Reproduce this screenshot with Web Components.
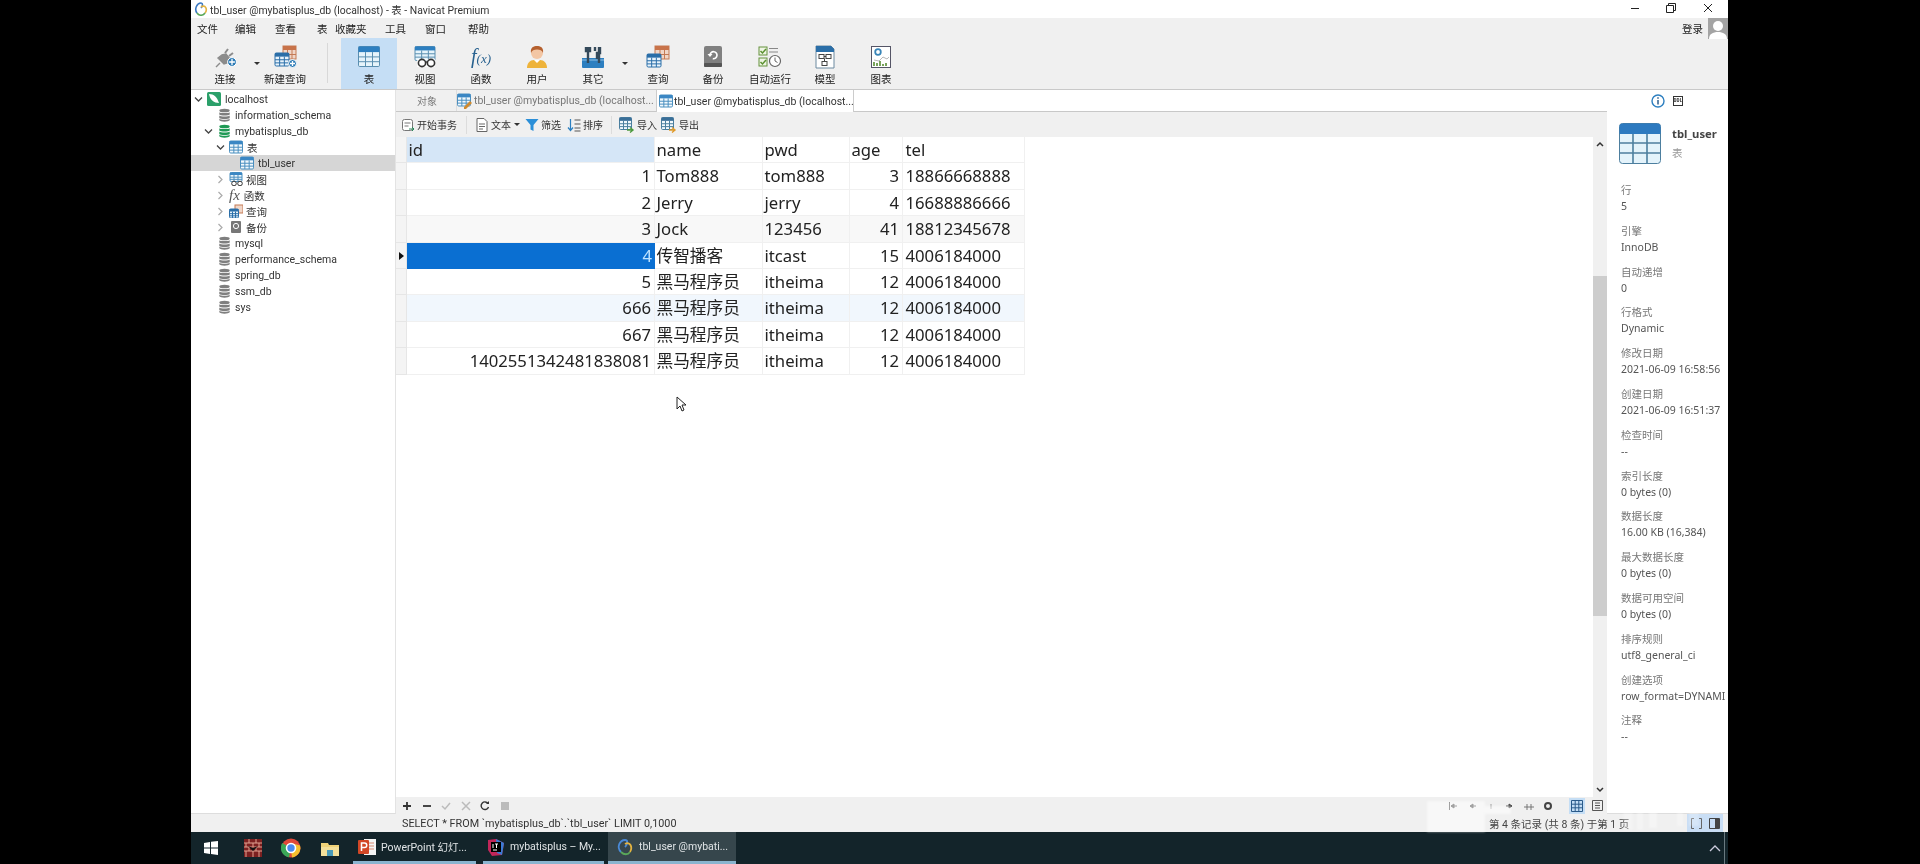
<!DOCTYPE html>
<html lang="zh">
<head>
<meta charset="utf-8">
<title>tbl_user - Navicat Premium</title>
<style>
html,body{margin:0;height:100%;background:#000;overflow:hidden;}
body{font-family:"Noto Sans","Noto Sans CJK SC",sans-serif;}
</style>
</head>
<body>
<app-window>
  <title-bar>tbl_user @mybatisplus_db (localhost) - 表 - Navicat Premium</title-bar>
  <menu-bar>
    <span style="width:38px">文件</span><span style="width:40px">编辑</span><span style="width:42px">查看</span><span style="width:18px">表</span><span style="width:50px">收藏夹</span><span style="width:40px">工具</span><span style="width:43px">窗口</span><span style="width:40px">帮助</span>
  </menu-bar>
  <tool-bar>
    <tool-button icon="plug" w="56">连接</tool-button><drop-arrow></drop-arrow>
    <tool-button icon="newquery" w="48">新建查询</tool-button>
    <tool-sep></tool-sep>
    <tool-button icon="table" w="56" active>表</tool-button>
    <tool-button icon="view" w="56">视图</tool-button>
    <tool-button icon="func" w="56">函数</tool-button>
    <tool-button icon="user" w="56">用户</tool-button>
    <tool-button icon="tools" w="56">其它</tool-button><drop-arrow></drop-arrow>
    <tool-button icon="query" w="58">查询</tool-button>
    <tool-button icon="backup" w="52">备份</tool-button>
    <tool-button icon="auto" w="62">自动运行</tool-button>
    <tool-button icon="model" w="48">模型</tool-button>
    <tool-button icon="chart" w="64">图表</tool-button>
  </tool-bar>
  <work-space>
    <tree-panel>
      <tree-row pad="2" chev="open" chm="3" icon="host" gap="3">localhost</tree-row>
      <tree-row pad="27" icon="db">information_schema</tree-row>
      <tree-row pad="12" chev="open" icon="dbon">mybatisplus_db</tree-row>
      <tree-row pad="24" chev="open" chm="4" icon="tbl">表</tree-row>
      <tree-row pad="49" icon="tbl" sel>tbl_user</tree-row>
      <tree-row pad="24" chev="shut" chm="4" icon="view2" gap="3">视图</tree-row>
      <tree-row pad="24" chev="shut" chm="4" icon="fx" gap="4">函数</tree-row>
      <tree-row pad="24" chev="shut" chm="4" icon="query2" gap="3">查询</tree-row>
      <tree-row pad="24" chev="shut" chm="4" icon="bak2" gap="3">备份</tree-row>
      <tree-row pad="27" icon="db">mysql</tree-row>
      <tree-row pad="27" icon="db">performance_schema</tree-row>
      <tree-row pad="27" icon="db">spring_db</tree-row>
      <tree-row pad="27" icon="db">ssm_db</tree-row>
      <tree-row pad="27" icon="db">sys</tree-row>
    </tree-panel>
    <center-pane>
      <tab-strip>
        <tab-item w="60" kind="plain">对象</tab-item>
        <tab-item w="200" kind="back" icon="tbledit">tbl_user @mybatisplus_db (localhost...</tab-item>
        <tab-item w="198" kind="front" icon="tbl">tbl_user @mybatisplus_db (localhost...</tab-item>
      </tab-strip>
      <sub-toolbar>
        <sub-tool icon="begin" style="margin-left:5px">开始事务</sub-tool>
        <bar-sep style="margin:0 8px 0 9px"></bar-sep>
        <sub-tool icon="text">文本</sub-tool><drop-arrow style="margin:0 4px 0 2px"></drop-arrow>
        <sub-tool icon="filter">筛选</sub-tool>
        <sub-tool icon="sort" style="margin-left:6px">排序</sub-tool>
        <bar-sep style="margin:0 7px 0 8px"></bar-sep>
        <sub-tool icon="imp">导入</sub-tool>
        <sub-tool icon="exp" style="margin-left:4px">导出</sub-tool>
      </sub-toolbar>
      <grid-area>
        <data-grid></data-grid>
        <v-scroll slot="bar"></v-scroll>
      </grid-area>
      <grid-footer></grid-footer>
    </center-pane>
    <info-panel>
      <info-item label="行">5</info-item>
      <info-item label="引擎">InnoDB</info-item>
      <info-item label="自动递增">0</info-item>
      <info-item label="行格式">Dynamic</info-item>
      <info-item label="修改日期">2021-06-09 16:58:56</info-item>
      <info-item label="创建日期">2021-06-09 16:51:37</info-item>
      <info-item label="检查时间">--</info-item>
      <info-item label="索引长度">0 bytes (0)</info-item>
      <info-item label="数据长度">16.00 KB (16,384)</info-item>
      <info-item label="最大数据长度">0 bytes (0)</info-item>
      <info-item label="数据可用空间">0 bytes (0)</info-item>
      <info-item label="排序规则">utf8_general_ci</info-item>
      <info-item label="创建选项">row_format=DYNAMI</info-item>
      <info-item label="注释">--</info-item>
    </info-panel>
  </work-space>
  <status-bar>SELECT * FROM `mybatisplus_db`.`tbl_user` LIMIT 0,1000</status-bar>
  <task-bar></task-bar>
  <water-mark></water-mark>
  <mouse-cursor></mouse-cursor>
</app-window>

<script>
// icons, all drawn by hand in a 24 box unless the viewBox says other
const tblGrid = (x,y,w,h,head,line,fill) => {
  let cw=w/3, ch=(h-h*0.28)/3, hh=h*0.28, s=`<rect x="${x}" y="${y}" width="${w}" height="${h}" rx="1.2" fill="${fill}" stroke="${line}" stroke-width="1"/><rect x="${x}" y="${y}" width="${w}" height="${hh}" fill="${head}"/>`;
  for(let i=1;i<3;i++){ s+=`<path d="M${x+cw*i} ${y+hh}V${y+h}M${x} ${y+hh+ch*i}H${x+w}" stroke="${line}" stroke-width="1" fill="none"/>`; }
  return s;
};
const svg = (inner,w=24,h=24,vb='0 0 24 24') => `<svg xmlns="http://www.w3.org/2000/svg" width="${w}" height="${h}" viewBox="${vb}">${inner}</svg>`;
const plus = (cx,cy,r) => `<circle cx="${cx}" cy="${cy}" r="${r}" fill="#2c7bb6" stroke="#fff"/><path d="M${cx-r+1.5} ${cy}H${cx+r-1.5}M${cx} ${cy-r+1.5}V${cy+r-1.5}" stroke="#fff" stroke-width="1.3"/>`;
const dbShape = (c) => `<g fill="${c}"><ellipse cx="7" cy="2.6" rx="5.6" ry="2"/><path d="M1.4 4.4c1 1.3 10.2 1.3 11.2 0V7c-1 1.5-10.2 1.5-11.2 0z"/><path d="M1.4 8c1 1.4 10.2 1.4 11.2 0v2.6c-1 1.5-10.2 1.5-11.2 0z"/><path d="M1.4 11.6c1 1.4 10.2 1.4 11.2 0v1.6c-1 1.9-10.2 1.9-11.2 0z"/></g>`;
const ICON = {
  plug: svg(`<path d="M3 22l4-4M5 13l6 6 3-1 3-4-4-5-4 1z" fill="#8c8c8c" stroke="#8c8c8c" stroke-width="1.4"/><path d="M12 8l3-4M16 11l4-3" stroke="#8c8c8c" stroke-width="2"/>${plus(19,17,4.4)}`),
  newquery: svg(`<rect x="10" y="1" width="13" height="13" fill="#f0d6c8" stroke="#c47a55"/><rect x="10" y="1" width="13" height="4" fill="#c8734a"/><path d="M14.5 5v9M19 5v9M10 9.5h13" stroke="#c47a55"/>${tblGrid(2,8,14,13,'#2a6ea8','#2a6ea8','#e8f3fb')}${plus(19.5,18.5,4)}`),
  table: svg(tblGrid(1.5,1.5,21,20,'#2d7fc0','#5a8fb0','#e6f4fb')),
  view: svg(`${tblGrid(2,1.5,20,14,'#2d7fc0','#5a8fb0','#e6f4fb')}<rect x="4" y="14" width="18" height="8" fill="#fff" opacity=".8"/><circle cx="9" cy="18" r="3.6" fill="#fff" stroke="#333" stroke-width="1.6"/><circle cx="18" cy="18" r="3.6" fill="#fff" stroke="#333" stroke-width="1.6"/><path d="M12.5 17h2" stroke="#333" stroke-width="1.4"/>`),
  func: `<span style="font:italic 20px 'Liberation Serif',serif;color:#28618f;white-space:nowrap;line-height:24px">f<span style="font-size:13px">(x)</span></span>`,
  user: svg(`<path d="M2 23c0-5 3-8 7-8h6c4 0 7 3 7 8z" fill="#eeb33a"/><path d="M9 15l3 3 3-3z" fill="#fff"/><circle cx="12" cy="8" r="6" fill="#f3c6a4"/><path d="M6 8c-1-6 3-7 6-7s7 1 6 7c-1-3-3-3.500-6-3.500S7 5 6 8z" fill="#b5602e"/>`),
  tools: svg(`<path d="M1 13h22v9a1 1 0 0 1-1 1H2a1 1 0 0 1-1-1z" fill="#2d7fc0"/><path d="M1 15h22" stroke="#8fc1e6"/><path d="M7 2v16M5 2v4h4V2M16 14V8h3V2M14 2v4" stroke="#34495a" stroke-width="2.400" fill="none"/><path d="M18 2v16" stroke="#34495a" stroke-width="2.400"/>`),
  query: svg(`<rect x="9" y="1" width="14" height="13" fill="#f0d6c8" stroke="#c47a55"/><rect x="9" y="1" width="14" height="4" fill="#c8734a"/><path d="M14 5v9M18.500 5v9M9 9.500h14" stroke="#c47a55"/>${tblGrid(1,9,14,13,'#2a6ea8','#2a6ea8','#e8f3fb')}`),
  backup: svg(`<rect x="3" y="1" width="18" height="21" rx="2" fill="#808080"/><rect x="3" y="18" width="18" height="4" rx="1" fill="#555"/><path d="M9 10a3.500 3.500 0 1 1 2.800 3.600" fill="none" stroke="#fff" stroke-width="1.600"/><path d="M6.500 9h5l-2.500 3z" fill="#fff"/>`),
  auto: svg(`<rect x="1" y="2" width="8" height="8" fill="#eef5e4" stroke="#64913c"/><path d="M2.500 6l2 2 3.500-4" stroke="#5b9130" stroke-width="1.500" fill="none"/><rect x="1" y="13" width="8" height="8" fill="#eef5e4" stroke="#64913c"/><path d="M2.500 17l2 2 3.500-4" stroke="#5b9130" stroke-width="1.500" fill="none"/><path d="M11 3.500h9M11 7h9M11 14h2" stroke="#888" stroke-width="1.200"/><circle cx="17" cy="16" r="5.500" fill="#fff" stroke="#666" stroke-width="1.200"/><path d="M17 12.500V16l2.500 1.500" stroke="#666" fill="none"/>`),
  model: svg(`<path d="M3 1h15l3 3v19H3z" fill="#fff" stroke="#6d8aa0"/><path d="M3 1h15l3 3v3H3z" fill="#2a6ea8"/><rect x="6" y="9.500" width="5" height="4" fill="none" stroke="#444"/><rect x="13" y="9.500" width="5" height="4" fill="none" stroke="#444"/><rect x="9" y="16.500" width="5" height="4" fill="none" stroke="#444"/><path d="M11 11.500h2M11.500 13.500v3" stroke="#444"/>`),
  chart: svg(`<rect x="2.500" y="1.500" width="19" height="21" fill="#fff" stroke="#556"/><circle cx="9" cy="7" r="2.800" fill="none" stroke="#3a86b8" stroke-width="1.800"/><path d="M5 15l5 1 4-4 4 2 2-2" fill="none" stroke="#b8b8b8"/><path d="M5 21v-4M8 21v-3M11 21v-5M14 21v-2M17 21v-3" stroke="#6a9a4a" stroke-width="1.800"/>`),
  host: svg(`<rect x="1" y="1" width="14" height="14" rx="1.500" fill="#2ba06a"/><path d="M3 3c5 0 8 3 10 9-5 0-9-3-10-9z" fill="#fff"/>`,16,16,'0 0 16 16'),
  db: svg(dbShape('#7f7f7f'),13,15,'0 0 14 16'),
  dbon: svg(dbShape('#1f9a55'),13,15,'0 0 14 16'),
  tbl: svg(tblGrid(.5,1,13,12,'#3b87c4','#4b8fbf','#f2f9fd'),14,14,'0 0 14 14'),
  tbledit: svg(`${tblGrid(.5,1,13,12,'#3b87c4','#4b8fbf','#f2f9fd')}<path d="M7 14l6-6 2 2-6 6H7z" fill="#d08a2e"/>`,16,16,'0 0 16 16'),
  view2: svg(`${tblGrid(1,.5,12,9,'#3b87c4','#4b8fbf','#f2f9fd')}<circle cx="5" cy="11.500" r="2.300" fill="#fff" stroke="#333"/><circle cx="11" cy="11.500" r="2.300" fill="#fff" stroke="#333"/>`,14,14,'0 0 14 14'),
  fx: `<span style="font:italic 15px 'Liberation Serif',serif;color:#555;line-height:14px">fx</span>`,
  query2: svg(`<rect x="6" y="1" width="8" height="8" fill="#f0d6c8" stroke="#c47a55"/>${tblGrid(.5,5,9,9,'#2a6ea8','#2a6ea8','#e8f3fb')}`,14,14,'0 0 14 14'),
  bak2: svg(`<rect x="2" y="1" width="10" height="12" rx="1" fill="#777"/><circle cx="7" cy="6" r="2.600" fill="none" stroke="#fff"/>`,14,14,'0 0 14 14'),
  begin: svg(`<rect x="1.500" y="1.500" width="10" height="11" rx="2" fill="#fff" stroke="#777"/><path d="M3.500 5h6M3.500 8h4" stroke="#777"/><path d="M8 11h5M11 9l2 2-2 2" fill="none" stroke="#2a8a5a"/>`,14,14,'0 0 14 14'),
  text: svg(`<path d="M2 .5h7l3 3v10H2z" fill="#fff" stroke="#666"/><path d="M4 6h6M4 8.500h6M4 11h4" stroke="#666"/>`,14,14,'0 0 14 14'),
  filter: svg(`<path d="M.5 1h13L8.500 7v6l-3-1.500V7z" fill="#2b8fd8"/>`,14,14,'0 0 14 14'),
  sort: svg(`<path d="M3.500 1v11M1 9.500l2.500 3 2.500-3" fill="none" stroke="#2b7fc0" stroke-width="1.200"/><path d="M7.500 2h6M7.500 6h6M7.500 10h6M7.500 13h6" stroke="#555"/>`,14,14,'0 0 14 14'),
  imp: svg(`${tblGrid(.5,.5,12,12,'#3a6f98','#4b7f9f','#f2f9fd')}<path d="M8 13h6M11 10.500l3 2.500-3 2.500" fill="none" stroke="#4e9a3f" stroke-width="1.400"/>`,16,16,'0 0 16 16'),
  exp: svg(`${tblGrid(.5,.5,12,12,'#3a6f98','#4b7f9f','#f2f9fd')}<path d="M8 13h6M11 10.500l3 2.500-3 2.500" fill="none" stroke="#e09a2a" stroke-width="1.400"/>`,16,16,'0 0 16 16')
};

// small helper so each element is just css + markup
function el(name, css, html){
  customElements.define(name, class extends HTMLElement{
    connectedCallback(){
      if(this.shadowRoot) return;
      this.attachShadow({mode:'open'}).innerHTML = `<style>${css}</style>${html(this)}`;
    }
  });
}
const LATIN = `Roboto,"Noto Sans CJK SC",sans-serif`;

el('app-window', `:host{display:flex;flex-direction:column;width:1537px;height:864px;margin-left:191px;position:relative;overflow:hidden;color:#222;filter:blur(.4px);}`, () => `<slot></slot>`);

el('title-bar', `:host{display:flex;align-items:center;height:18px;background:#fff;font:10.400px ${LATIN};color:#333;padding-left:19px;position:relative;white-space:nowrap;}
  svg.logo{position:absolute;left:3px;top:2px}
  .ctl{position:absolute;top:3px}`, () => `
  <svg class="logo" width="14" height="14" viewBox="0 0 14 14"><path d="M3 11C0 7 3 1 7 1c2 0 2 3 0 5" fill="none" stroke="#3a78c2" stroke-width="1.600"/><path d="M7 5c4-3 7 2 4 6" fill="none" stroke="#e3b341" stroke-width="1.600"/><path d="M3 11c2 3 6 3 8 0" fill="none" stroke="#5aa85a" stroke-width="1.600"/></svg>
  <slot></slot>
  <svg class="ctl" style="left:1439px" width="10" height="10"><path d="M1 5.500h8" stroke="#222"/></svg>
  <svg class="ctl" style="left:1475px" width="10" height="10"><path d="M.5 2.500h7v7h-7zM2.500 2.500v-2h7v7h-2" fill="none" stroke="#222"/></svg>
  <svg class="ctl" style="left:1512px" width="10" height="10"><path d="M1 1l8 8M9 1l-8 8" stroke="#222"/></svg>`);

el('menu-bar', `:host{display:flex;align-items:center;height:20px;background:#f0f0f0;padding-left:6px;font-size:10.500px;color:#222;position:relative;}
  ::slotted(span){display:block;flex:none;white-space:nowrap;}
  .login{position:absolute;left:1491px;top:3px}
  svg{position:absolute;left:1517px;top:0}`, () => `<slot></slot><span class="login">登录</span>
  <svg width="20" height="21" viewBox="0 0 20 21"><rect width="20" height="21" fill="#a4a4a4"/><circle cx="10" cy="8" r="5" fill="#fff"/><path d="M1 21c0-5 4-7 9-7s9 2 9 7z" fill="#fff"/></svg>`);

el('tool-bar', `:host{display:flex;background:#f0f0f0;padding-left:6px;border-bottom:1px solid #c9c9c9;box-sizing:content-box;height:51px;}`, () => `<slot></slot>`);

el('tool-button', `:host{display:flex;flex-direction:column;align-items:center;flex:none;font-size:10.500px;color:#222;padding-top:7px;box-sizing:border-box;height:51px;white-space:nowrap;}
  :host([active]){background:#c5def5;}
  .ic{height:24px;display:flex;align-items:center;justify-content:center;}
  .tx{margin-top:3px;line-height:15px}`, t => {
    t.style.width = t.getAttribute('w')+'px';
    return `<div class="ic">${ICON[t.getAttribute('icon')]}</div><div class="tx"><slot></slot></div>`;
  });

el('drop-arrow', `:host{display:block;flex:none;width:8px;align-self:center;}
  i{display:block;width:0;height:0;margin:0 auto;border:3px solid transparent;border-top:3px solid #333;border-bottom:0}`, () => `<i></i>`);
el('tool-sep', `:host{display:block;flex:none;width:1px;height:40px;background:#d8d8d8;margin:5px 13px 0 18px;}`, () => ``);

el('work-space', `:host{display:flex;flex:1;min-height:0;background:#fff;}`, () => `<slot></slot>`);

el('tree-panel', `:host{display:block;flex:none;width:205px;padding-top:1px;background:#fff;border-right:1px solid #e3e3e3;border-bottom:1px solid #ddd;font:10.500px ${LATIN};color:#333;box-sizing:border-box;}`, () => `<slot></slot>`);

el('tree-row', `:host{display:flex;align-items:center;height:16px;white-space:nowrap;}
  :host([sel]){background:#d6d6d6;}
  .ch{display:flex;justify-content:center;flex:none;width:10px;margin-right:5px}
  .ic{display:flex;align-items:center;flex:none;margin-right:4px;width:auto}`, t => {
    t.style.paddingLeft = t.getAttribute('pad')+'px';
    const c = t.getAttribute('chev');
    const chev = c==='open' ? `<svg width="9" height="7"><path d="M1 1.500l3.500 3.500 3.500-3.500" fill="none" stroke="#444" stroke-width="1.300"/></svg>`
      : c==='shut' ? `<svg width="7" height="9"><path d="M1.500 1l3.500 3.500-3.500 3.500" fill="none" stroke="#aaa" stroke-width="1.200"/></svg>` : '';
    const gap = t.getAttribute('gap'), chm = t.getAttribute('chm');
    return (c?`<div class="ch" ${chm?`style="margin-right:${chm}px"`:''}>${chev}</div>`:'')+`<div class="ic" ${gap?`style="margin-right:${gap}px"`:''}>${ICON[t.getAttribute('icon')]}</div><slot></slot>`;
  });

el('center-pane', `:host{display:flex;flex-direction:column;flex:1;min-width:0;}`, () => `<slot></slot>`);

el('tab-strip', `:host{display:flex;height:22px;background:#fff;border-bottom:1px solid #c8c8c8;flex:none;box-sizing:border-box;}`, () => `<slot></slot>`);
el('tab-item', `:host{display:flex;align-items:center;flex:none;height:21px;font:10.500px ${LATIN};white-space:nowrap;box-sizing:border-box;overflow:hidden;padding-left:2px;gap:1px;}
  :host([kind=plain]){justify-content:center;background:#f0f0f0;color:#777;font-size:10px}
  :host([kind=back]){background:#f0f0f0;color:#777;border-left:1px solid #ddd;padding-left:0}
  :host([kind=front]){background:#fff;color:#333;border-left:1px solid #ccc;border-right:1px solid #ccc;height:22px;}
  svg{flex:none}`, t => {
    t.style.width = t.getAttribute('w')+'px';
    const i = t.getAttribute('icon');
    return (i?ICON[i]:'')+`<slot></slot>`;
  });

el('sub-toolbar', `:host{display:flex;align-items:center;height:25px;background:#f0f0f0;flex:none;}`, () => `<slot></slot>`);
el('sub-tool', `:host{display:flex;align-items:center;gap:2px;font-size:10px;color:#333;white-space:nowrap;flex:none;}
  svg{flex:none}`, t => `${ICON[t.getAttribute('icon')]}<slot></slot>`);
el('bar-sep', `:host{display:block;width:1px;height:18px;background:#dcdcdc;flex:none;}`, () => ``);

el('grid-area', `:host{display:flex;flex:1;min-height:0;background:#fff;position:relative;}
  .main{flex:1;min-width:0}`, () => `<div class="main"><slot></slot></div><slot name="bar"></slot>`);

const COLS = ['id','name','pwd','age','tel'];
const ROWS = [
  ['1','Tom888','tom888','3','18866668888'],
  ['2','Jerry','jerry','4','16688886666'],
  ['3','Jock','123456','41','18812345678'],
  ['4','传智播客','itcast','15','4006184000'],
  ['5','黑马程序员','itheima','12','4006184000'],
  ['666','黑马程序员','itheima','12','4006184000'],
  ['667','黑马程序员','itheima','12','4006184000'],
  ['1402551342481838081','黑马程序员','itheima','12','4006184000']
];
el('data-grid', `:host{display:grid;grid-template-columns:11px 248px 108px 87px 53px 122px;grid-auto-rows:26.400px;width:629px;font-size:16.700px;color:#222;line-height:25px;}
  div{box-sizing:border-box;border-right:1px solid #f0f0f0;border-bottom:1px solid #f0f0f0;padding:0 1.500px;white-space:nowrap;overflow:hidden;}
  .in{background:#f4f4f4;padding:0;position:relative;border-color:#e6e6e6}
  .hd.id{background:#d5e6f7;}
  .tl{padding-left:2.500px}
  .r{text-align:right;padding-right:3px}
  .alt{background:#f8f8f8}
  .blue{background:#f1f7fd}
  .cur{background:#0a6fd2;color:#bfe3ff;border:0;}
  .arrow{position:absolute;left:3px;top:9px;width:0;height:0;border:4px solid transparent;border-left:5px solid #111;border-right:0}`, () => {
    let h = `<div class="in"></div>`+COLS.map((c,i)=>`<div class="hd ${c} ${i===4?'tl':''}">${c}</div>`).join('');
    ROWS.forEach((r,ri)=>{
      const bg = ri===2?'alt':ri===5?'blue':'';
      h += `<div class="in">${ri===3?'<span class="arrow"></span>':''}</div>`;
      r.forEach((v,i)=>{
        const right = i===0||i===3;
        const cur = ri===3&&i===0;
        h += `<div class="${right?'r ':''}${i===4?'tl ':''}${cur?'cur':bg}">${v}</div>`;
      });
    });
    return h;
  });

el('v-scroll', `:host{display:flex;flex-direction:column;align-items:center;flex:none;width:14px;background:#f0f0f0;position:relative;}
  .thumb{position:absolute;left:0;right:0;top:139px;height:340px;background:#cdcdcd}
  svg{position:absolute;left:3px}`, () => `
  <svg style="top:4px" width="8" height="6"><path d="M1 5l3-3 3 3" fill="none" stroke="#333" stroke-width="1.500"/></svg>
  <div class="thumb"></div>
  <svg style="top:650px" width="8" height="6"><path d="M1 1l3 3 3-3" fill="none" stroke="#333" stroke-width="1.500"/></svg>`);

el('grid-footer', `:host{display:flex;align-items:center;height:17px;background:#f0f0f0;flex:none;padding-left:6px;justify-content:space-between;padding-right:4px;}
  .l,.r{display:flex;align-items:center;}
  .l svg{margin-right:9.500px;}
  .r svg{margin-left:9px}
  .on{background:#c5def5;display:flex;padding:2px 2px;margin-left:16px}
  .on svg{margin:0}`, () => `
  <div class="l">
   <svg width="10" height="10"><path d="M5 1v8M1 5h8" stroke="#333" stroke-width="1.800"/></svg>
   <svg width="10" height="10"><path d="M1 5h8" stroke="#333" stroke-width="1.800"/></svg>
   <svg width="10" height="10"><path d="M1 5l3 3 5-6" fill="none" stroke="#bbb" stroke-width="1.500"/></svg>
   <svg width="10" height="10"><path d="M1 1l8 8M9 1l-8 8" stroke="#bbb" stroke-width="1.500"/></svg>
   <svg width="10" height="10"><path d="M8 2.500A3.800 3.800 0 1 0 8.500 6" fill="none" stroke="#333" stroke-width="1.400"/><path d="M6 3h3V0" fill="#333"/></svg>
   <svg width="10" height="10"><rect x="1" y="1" width="8" height="8" fill="#bbb"/></svg>
  </div>
  <div class="r">
   <svg width="10" height="10"><path d="M1.500 1v8M9 5H3M3 5l3-2v4z" stroke="#444" fill="#444"/></svg>
   <svg width="10" height="10"><path d="M9 5H3M3 5l3-2v4z" stroke="#444" fill="#444"/></svg>
   <svg width="10" height="10"><path d="M5 3v5" stroke="#999"/></svg>
   <svg width="10" height="10"><path d="M1 5h6M7 5L4 3v4z" stroke="#444" fill="#444"/></svg>
   <svg width="10" height="10"><path d="M0 6h10M3 3v6M7 3v6" stroke="#777"/></svg>
   <svg width="10" height="10"><circle cx="5" cy="5" r="3" fill="none" stroke="#444" stroke-width="2"/></svg>
   <div class="on"><svg width="12" height="12"><path d="M.5.5h11v11H.5zM4.200.5v11M7.800.5v11M.5 4.200h11M.5 7.800h11" fill="none" stroke="#2a5a8a"/></svg></div>
   <svg width="11" height="11" style="margin-left:7px"><path d="M.5.5h10v10H.5zM3 3h5M3 5.500h5M3 8h5" fill="none" stroke="#555"/></svg>
  </div>`);

el('info-panel', `:host{display:block;flex:none;width:121px;background:#fff;box-sizing:border-box;font-size:10.500px;position:relative;overflow:hidden;border-bottom:1px solid #ddd;}
  .top{display:flex;align-items:center;height:20px;padding:1px 0 0 44px;gap:8px}
  .ddl{font:bold 5px "Liberation Mono",monospace;border:1px solid #333;width:10px;height:10px;box-sizing:border-box;display:flex;align-items:center;justify-content:center;color:#333;overflow:hidden}
  .head{display:flex;height:47px;padding:11px 0 0 12px;box-sizing:border-box;margin-top:1px}
  .nm{margin-left:11px;padding-top:1px;font-weight:700;font-size:11.300px;color:#444;line-height:20px}
  .ty{font-weight:400;font-size:10.500px;color:#999;line-height:18px}
  .list{padding:23px 0 0 14px}`, () => `
  <div class="top">
    <svg width="14" height="14"><circle cx="7" cy="7" r="6" fill="#fff" stroke="#2d7fc0" stroke-width="1.400"/><path d="M7 6v4.500M7 3.200v1.500" stroke="#2d5f8f" stroke-width="1.500"/></svg>
    <span class="ddl">DDL</span>
  </div>
  <div class="head">
    <svg width="42" height="41" viewBox="0 0 42 41"><rect x=".5" y=".5" width="41" height="40" rx="3" fill="#e4f3fb" stroke="#4d7f9f"/><path d="M.5 11V3.500a3 3 0 0 1 3-3h35a3 3 0 0 1 3 3V11z" fill="#2d7ac0"/><path d="M14 11v29M28 11v29M1 20h40M1 30h40" stroke="#4d7f9f" stroke-width="1.600"/></svg>
    <div class="nm">tbl_user<div class="ty">表</div></div>
  </div>
  <div class="list"><slot></slot></div>`);

el('info-item', `:host{display:block;height:40.800px;white-space:nowrap;overflow:hidden;}
  .l{color:#777;line-height:16px;height:16px}
  .v{color:#555;line-height:16px;height:16px}`, t => `<div class="l">${t.getAttribute('label')}</div><div class="v"><slot></slot></div>`);

el('status-bar', `:host{display:flex;align-items:center;height:18px;background:#f0f0f0;flex:none;padding-left:211px;font:10.800px ${LATIN};color:#333;white-space:nowrap;position:relative;}
  .rec{position:absolute;left:1298px;top:2px;color:#444;font-size:10.500px}
  .btns{position:absolute;left:1496px;top:0;height:18px;width:36px;background:#c9def5;display:flex;align-items:center;justify-content:space-around}`, () => `
  <slot></slot><span class="rec">第 4 条记录 (共 8 条) 于第 1 页</span>
  <div class="btns">
    <svg width="11" height="11"><path d="M3 .5H.5v10H3M8 .5h2.500v10H8" fill="none" stroke="#666"/></svg>
    <svg width="11" height="11"><path d="M.5.5h10v10H.5z" fill="none" stroke="#444"/><rect x="6" y="1" width="4" height="9" fill="#444"/></svg>
  </div>`);

el('task-bar', `:host{display:flex;align-items:stretch;height:32px;background:#13242a;flex:none;position:relative;color:#e0e4e6;font:10.500px ${LATIN};white-space:nowrap;}
  .i{display:flex;align-items:center;justify-content:center;flex:none}
  .t{display:flex;align-items:center;flex:none;box-sizing:border-box;border-bottom:3px solid #8ab4cf;padding:0 0 0 5px;gap:5px;overflow:hidden}
  .t svg{flex:none}
  .act{background:#36464c}
  .end{position:absolute;left:1533px;top:0;bottom:0;width:1px;background:#6a7a80}
  .up{position:absolute;left:1518px;top:12px}`, () => `
  <div class="i" style="width:40px"><svg width="14" height="14"><path d="M0 2l6-1v5.500H0zM7 .8L14 0v6.500H7zM0 7.500h6V13l-6-1zM7 7.500h7V14l-7-1z" fill="#fff"/></svg></div>
  <div class="i" style="width:44px"><svg width="20" height="20"><rect x="1" y="1" width="18" height="18" fill="#7c2020"/><path d="M1 5h18M1 9h18M1 13h18M6 1v4M13 1v4M3 5v4M10 5v4M16 5v4M6 9v4M13 9v4M3 13v6M10 13v6M16 13v6" stroke="#e0a090"/><path d="M5 8l5 5 5-5-5 2z" fill="#111"/></svg></div>
  <div class="i" style="width:32px"><svg width="20" height="20"><circle cx="10" cy="10" r="9.500" fill="#e0493a"/><path d="M10 10L1.200 5A9.500 9.500 0 0 0 8 19.300z" fill="#3aa757"/><path d="M10 10l1 9.500A9.500 9.500 0 0 0 19 7.500L10 5z" fill="#f5c02f"/><circle cx="10" cy="10" r="4.500" fill="#4a8af0" stroke="#fff" stroke-width="1.600"/></svg></div>
  <div class="i" style="width:46px"><svg width="18" height="15"><path d="M0 2h7l1 2h10v11H0z" fill="#f0d278"/><rect y="6" width="18" height="9" fill="#f5e09a"/><rect x="6" y="9" width="6" height="6" fill="#4a9ab8"/></svg></div>
  <div class="t" style="width:123px"><svg width="18" height="18"><rect x="6" y="1" width="12" height="16" fill="#f4f4f4"/><path d="M11 5h5M11 8h5M11 11h5" stroke="#d98a70"/><rect y="2" width="11" height="14" rx="1" fill="#d24726"/><path d="M3.500 13V5h3a2 2 0 0 1 0 4.500h-3" fill="none" stroke="#fff" stroke-width="1.500"/></svg><span>PowerPoint 幻灯...</span></div>
  <div style="width:7px;flex:none"></div>
  <div class="t" style="width:121px;padding-left:4px"><svg width="18" height="18"><path d="M1 2l8-1 8 4-2 12-10 1-4-6z" fill="#c2265a"/><path d="M9 1l8 4-2 12-5-2z" fill="#3a7bd5"/><rect x="4" y="4" width="10" height="10" fill="#000"/><path d="M6 6v4M8 6h3M9.500 6v4M6 12h4" stroke="#fff"/></svg><span>mybatisplus – My...</span></div>
  <div style="width:4px;flex:none"></div>
  <div class="t act" style="width:128px;padding-left:8px"><svg width="18" height="18"><path d="M5 14C0 9 4 2 9 2c3 0 3 4 0 7" fill="none" stroke="#4a8ad8" stroke-width="1.800"/><path d="M9 6c5-3 8 3 5 8" fill="none" stroke="#e3b341" stroke-width="1.800"/><path d="M5 14c3 3 7 3 9 0" fill="none" stroke="#5aa85a" stroke-width="1.800"/></svg><span>tbl_user @mybati...</span></div>
  <svg class="up" width="12" height="8"><path d="M1 7l5-5 5 5" fill="none" stroke="#ccd" stroke-width="1.300"/></svg>
  <div class="end"></div>`);

// faint white stamp of the video logo lying over the lower right corner
el('water-mark', `:host{display:block;position:absolute;left:1236px;top:770px;width:300px;height:70px;pointer-events:none;}
  svg{display:block;filter:blur(1px)}`, () => `
  <svg width="300" height="70"><g fill="#fff" opacity=".5">
    <rect x="0" y="31" width="58" height="31"/><rect x="58" y="36" width="26" height="8"/>
    <rect x="196" y="30" width="10" height="30" opacity=".5"/><rect x="210" y="14" width="6" height="46" opacity=".6"/><rect x="222" y="12" width="8" height="46" opacity=".7"/><rect x="250" y="26" width="6" height="30" opacity=".6"/><rect x="262" y="30" width="10" height="26" opacity=".5"/></g></svg>`);

el('mouse-cursor', `:host{display:block;position:absolute;left:485px;top:395px;width:11px;height:16px;pointer-events:none;}`, () => `
  <svg width="11" height="16" viewBox="0 0 11 16"><path d="M1 1v12l3-3 2 5 2-1-2-5h4z" fill="#fff" stroke="#222"/></svg>`);
</script>
</body>
</html>
